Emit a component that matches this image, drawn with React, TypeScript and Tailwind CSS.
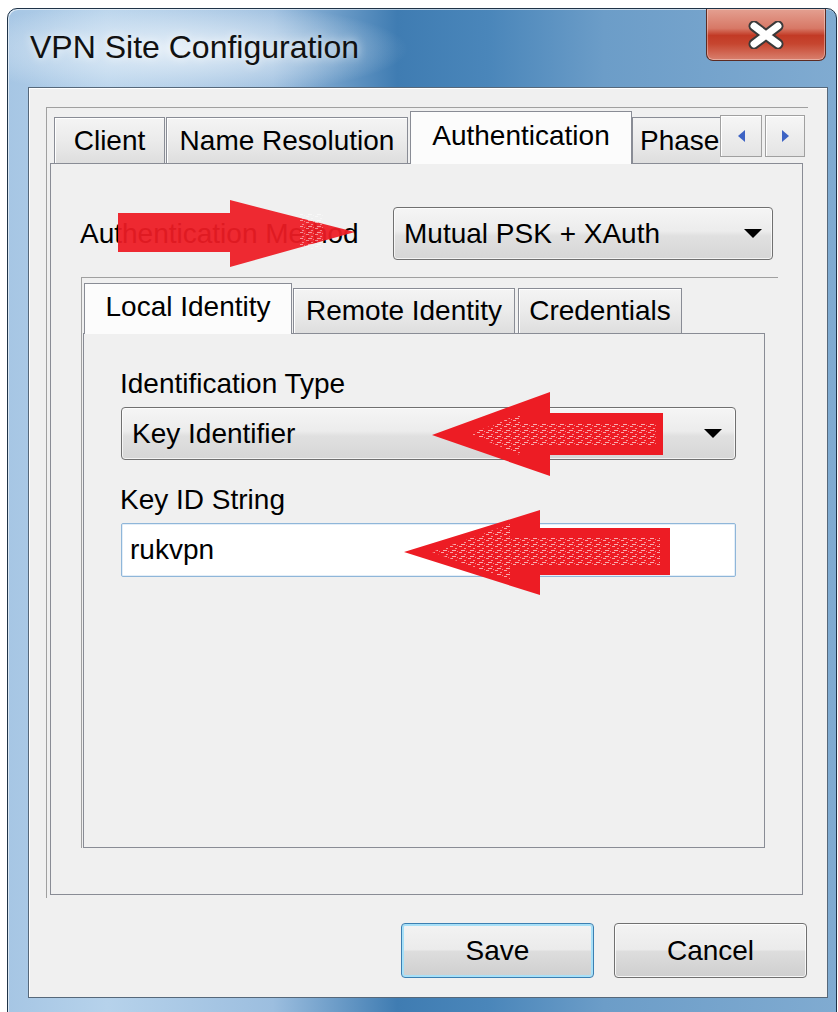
import React from 'react';

const font = "font-['Liberation_Sans',Arial,sans-serif]";

function DropArrow() {
  return (
    <svg width="18" height="9" viewBox="0 0 18 9">
      <path d="M0 0H18L9 9Z" fill="#000" />
    </svg>
  );
}

function ComboBox({ value, width, padRight }: { value: string; width: string; padRight: string }) {
  return (
    <div
      className={`flex h-[53px] ${width} items-center justify-between rounded-[4px] border border-[#707070] bg-[linear-gradient(180deg,#f5f5f5_0%,#ececec_45%,#e0e0e0_55%,#d6d6d6_100%)] pl-[10px] ${padRight} shadow-[inset_0_0_0_1px_rgba(255,255,255,0.7)]`}
    >
      <span>{value}</span>
      <DropArrow />
    </div>
  );
}

interface TabProps {
  label: string;
  width: string;
  selected?: boolean;
  tall: string;
  short: string;
  gap?: string;
}

function Tab({ label, width, selected, tall, short, gap = '' }: TabProps) {
  if (selected) {
    return (
      <div
        className={`relative z-10 -mb-px flex ${tall} ${width} ${gap} items-center justify-center border border-b-0 border-[#898c95] bg-[#fcfcfc] pb-[4px]`}
      >
        {label}
      </div>
    );
  }
  return (
    <div
      className={`flex ${short} ${width} ${gap} items-center justify-center border border-b-0 border-[#898c95] bg-[linear-gradient(180deg,#f4f4f4_0%,#ebebeb_50%,#dedede_100%)] shadow-[inset_1px_1px_0_#fff]`}
    >
      {label}
    </div>
  );
}

function ScrollButton({ dir, width, gap = '' }: { dir: 'left' | 'right'; width: string; gap?: string }) {
  return (
    <div
      className={`mb-[6px] flex h-[42px] ${width} ${gap} items-center justify-center self-end border border-[#a0a0a0] bg-[linear-gradient(180deg,#f6f6f6_0%,#e4e4e4_100%)] shadow-[inset_1px_1px_0_#fff]`}
    >
      <svg width="7" height="12" viewBox="0 0 7 12">
        {dir === 'left' ? (
          <path d="M7 0V12L0 6Z" fill="#3d63c4" />
        ) : (
          <path d="M0 0V12L7 6Z" fill="#3d63c4" />
        )}
      </svg>
    </div>
  );
}

function Button({ label, primary }: { label: string; primary?: boolean }) {
  return (
    <div
      className={`flex h-[55px] w-[193px] items-center justify-center rounded-[4px] border bg-[linear-gradient(180deg,#f3f3f3_0%,#ebebeb_48%,#dddddd_52%,#cfcfcf_100%)] ${
        primary
          ? 'border-[#3c7fb1] shadow-[inset_0_0_0_2px_#a7e0f8]'
          : 'border-[#707070] shadow-[inset_0_0_0_1px_rgba(255,255,255,0.8)]'
      }`}
    >
      {label}
    </div>
  );
}

// red paint-style arrows drawn on top of the dialog
function Arrows() {
  return (
    <svg className="pointer-events-none absolute left-0 top-0" width="838" height="1012" viewBox="0 0 838 1012">
      <defs>
        <pattern id="scratch" width="9" height="6" patternUnits="userSpaceOnUse">
          <rect x="0" y="0" width="3" height="1" fill="#fff" opacity="0.8" />
          <rect x="5" y="2" width="2" height="1" fill="#fff" opacity="0.7" />
          <rect x="2" y="4" width="4" height="1" fill="#fff" opacity="0.85" />
          <rect x="7" y="5" width="1" height="1" fill="#fff" opacity="0.6" />
        </pattern>
      </defs>
      <g fill="#ed1c24" fillOpacity="0.94">
        <polygon points="118,213 230,213 230,200 355,232 230,267 230,252 118,252" />
      </g>
      <rect x="300" y="214" width="24" height="36" fill="url(#scratch)" opacity="0.6" />
      <g fill="#ed1c24">
        <polygon points="432,435 550,392 550,413 663,413 663,455 550,455 550,476" />
        <polygon points="404,552 540,510 540,528 670,528 670,575 540,575 540,595" />
      </g>
      <polygon points="470,434 520,414 520,424 656,424 656,446 520,446 520,455" fill="url(#scratch)" opacity="0.75" />
      <polygon points="432,552 510,524 510,538 660,538 660,566 510,566 510,580" fill="url(#scratch)" opacity="0.75" />
    </svg>
  );
}

export default function App() {
  return (
    <div className={`relative h-[1012px] w-[838px] overflow-hidden bg-white text-[28px] text-black ${font}`}>
      <div className="ml-[7px] mt-[8px] flex h-[1012px] w-[830px] flex-col rounded-t-[10px] border border-[#1f3347] bg-[linear-gradient(90deg,#a6c6e4_0%,#b6d2eb_12%,#9cbedf_32%,#3f7cb2_47%,#4a86ba_58%,#6c9dc8_72%,#80abd1_100%)] shadow-[inset_1px_1px_0_rgba(255,255,255,0.6)]">
        {/* title bar */}
        <div className="flex h-[78px] items-start justify-between rounded-t-[10px] bg-[radial-gradient(ellipse_230px_48px_at_170px_40px,rgba(232,241,249,0.95),rgba(232,241,249,0)_100%)]">
          <div className="self-center pb-[2px] pl-[22px] text-[32px] text-[#111] [text-shadow:0_0_10px_rgba(255,255,255,0.9)]">
            VPN Site Configuration
          </div>
          <div className="mr-[10px] flex h-[52px] w-[120px] items-center justify-center rounded-b-[7px] border border-t-0 border-[#5c2b22] bg-[linear-gradient(180deg,#e4a091_0%,#d77866_38%,#c23a25_52%,#c6452f_68%,#d9806e_100%)] shadow-[inset_0_0_0_1px_rgba(255,255,255,0.35)]">
            <svg width="36" height="28" viewBox="0 0 36 28">
              <path d="M6 5L30 23M30 5L6 23" stroke="#3a3a3a" strokeWidth="11" strokeLinecap="round" />
              <path d="M6 5L30 23M30 5L6 23" stroke="#fff" strokeWidth="7" strokeLinecap="round" />
            </svg>
          </div>
        </div>

        {/* client area */}
        <div className="ml-[20px] flex h-[911px] w-[800px] flex-col border border-[#56687a] bg-[#f0f0f0] shadow-[inset_1px_1px_0_#fff]">
          {/* outer tab control */}
          <div className="ml-[17px] mt-[19px] flex h-[791px] w-[762px] flex-col border-l border-t border-[#a0a0a0] pl-[3px] pt-[3px]">
            <div className="flex h-[52px] items-end pl-[4px]">
              <Tab label="Client" width="w-[111px]" tall="h-[53px]" short="h-[46px]" />
              <Tab label="Name Resolution" width="w-[242px]" tall="h-[53px]" short="h-[46px]" gap="ml-[1px]" />
              <Tab label="Authentication" width="w-[222px]" tall="h-[53px]" short="h-[46px]" gap="ml-[2px]" selected />
              <div className="flex h-[46px] w-[88px] items-center whitespace-nowrap border-l border-t border-[#898c95] bg-[linear-gradient(180deg,#f4f4f4_0%,#ebebeb_50%,#dedede_100%)] pl-[7px]">
                Phase
              </div>
              <ScrollButton dir="left" width="w-[42px]" />
              <ScrollButton dir="right" width="w-[40px]" gap="ml-[3px]" />
            </div>

            <div className="flex h-[732px] w-[753px] flex-col border border-[#898c95] bg-[#f0f0f0]">
              <div className="mt-[43px] flex items-center pl-[29px]">
                <div className="w-[313px]">Authentication Method</div>
                <ComboBox value="Mutual PSK + XAuth" width="w-[380px]" padRight="pr-[10px]" />
              </div>

              {/* inner tab control */}
              <div className="ml-[30px] mt-[17px] flex h-[571px] w-[697px] flex-col border-l border-t border-[#a0a0a0] pl-[1px] pt-[5px]">
                <div className="flex h-[50px] items-end">
                  <Tab label="Local Identity" width="w-[208px]" tall="h-[51px]" short="h-[45px]" gap="ml-[1px]" selected />
                  <Tab label="Remote Identity" width="w-[222px]" tall="h-[51px]" short="h-[45px]" gap="ml-[1px]" />
                  <Tab label="Credentials" width="w-[164px]" tall="h-[51px]" short="h-[45px]" gap="ml-[3px]" />
                </div>
                <div className="flex h-[515px] w-[682px] flex-col border border-[#898c95] bg-[#f0f0f0] pl-[36px]">
                  <div className="mt-[34px] leading-8">Identification Type</div>
                  <div className="mt-[7px] ml-[1px]">
                    <ComboBox value="Key Identifier" width="w-[615px]" padRight="pr-[13px]" />
                  </div>
                  <div className="mt-[24px] leading-8">Key ID String</div>
                  <div className="ml-[1px] mt-[7px] flex h-[54px] w-[615px] items-center rounded-[2px] border border-[#8fb6d9] bg-white pl-[8px] shadow-[inset_0_0_0_1px_#e3eef8]">
                    rukvpn
                  </div>
                </div>
              </div>
            </div>
          </div>

          <div className="mt-[25px] flex justify-end gap-[20px] pr-[20px]">
            <Button label="Save" primary />
            <Button label="Cancel" />
          </div>
        </div>
      </div>
      <Arrows />
    </div>
  );
}
